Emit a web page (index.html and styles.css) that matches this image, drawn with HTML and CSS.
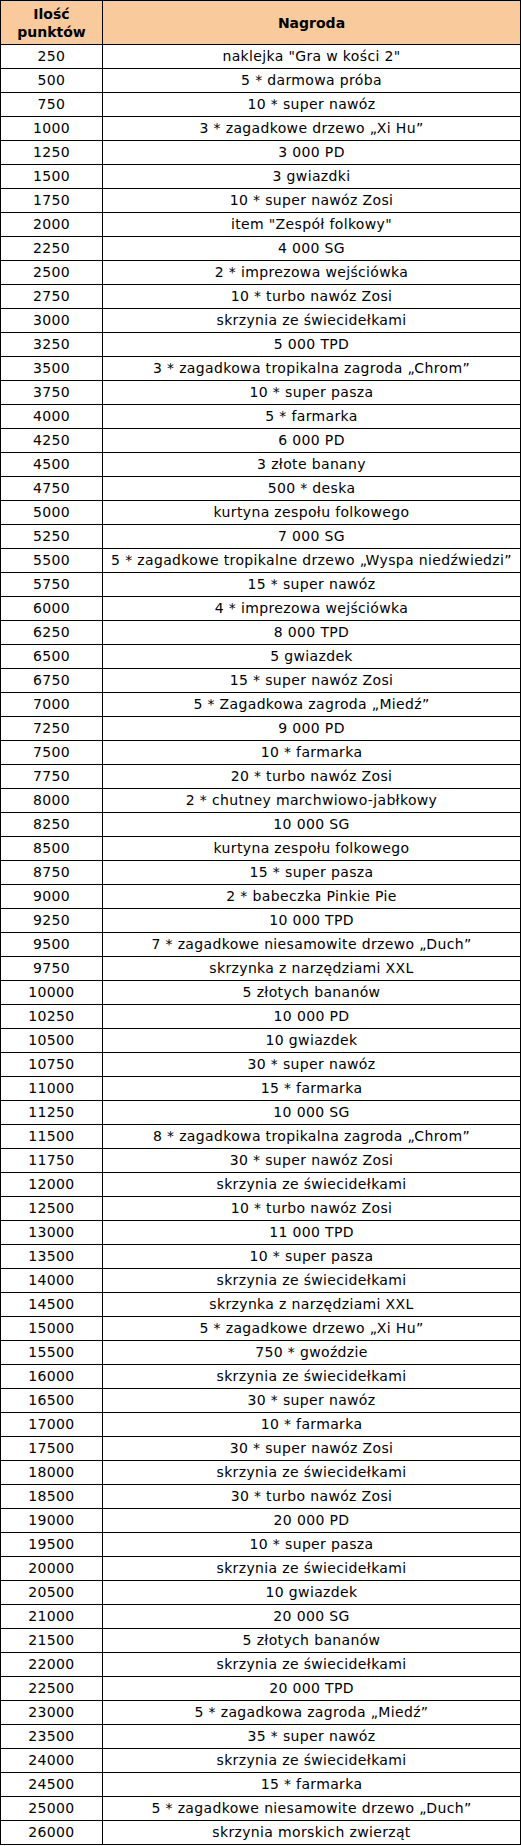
FILE: index.html
```html
<!DOCTYPE html>
<html lang="pl">
<head>
<meta charset="utf-8">
<title>Nagrody</title>
<link rel="stylesheet" href="styles.css">
</head>
<body>
<table class="rewards">
<colgroup><col class="c-pts"><col class="c-prize"></colgroup>
<thead>
<tr><th>Ilość<br>punktów</th><th>Nagroda</th></tr>
</thead>
<tbody>
<tr><td>250</td><td>naklejka "Gra w kości 2"</td></tr>
<tr><td>500</td><td>5 * darmowa próba</td></tr>
<tr><td>750</td><td>10 * super nawóz</td></tr>
<tr><td>1000</td><td>3 * zagadkowe drzewo „Xi Hu”</td></tr>
<tr><td>1250</td><td>3 000 PD</td></tr>
<tr><td>1500</td><td>3 gwiazdki</td></tr>
<tr><td>1750</td><td>10 * super nawóz Zosi</td></tr>
<tr><td>2000</td><td>item "Zespół folkowy"</td></tr>
<tr><td>2250</td><td>4 000 SG</td></tr>
<tr><td>2500</td><td>2 * imprezowa wejściówka</td></tr>
<tr><td>2750</td><td>10 * turbo nawóz Zosi</td></tr>
<tr><td>3000</td><td>skrzynia ze świecidełkami</td></tr>
<tr><td>3250</td><td>5 000 TPD</td></tr>
<tr><td>3500</td><td>3 * zagadkowa tropikalna zagroda „Chrom”</td></tr>
<tr><td>3750</td><td>10 * super pasza</td></tr>
<tr><td>4000</td><td>5 * farmarka</td></tr>
<tr><td>4250</td><td>6 000 PD</td></tr>
<tr><td>4500</td><td>3 złote banany</td></tr>
<tr><td>4750</td><td>500 * deska</td></tr>
<tr><td>5000</td><td>kurtyna zespołu folkowego</td></tr>
<tr><td>5250</td><td>7 000 SG</td></tr>
<tr><td>5500</td><td>5 * zagadkowe tropikalne drzewo „Wyspa niedźwiedzi”</td></tr>
<tr><td>5750</td><td>15 * super nawóz</td></tr>
<tr><td>6000</td><td>4 * imprezowa wejściówka</td></tr>
<tr><td>6250</td><td>8 000 TPD</td></tr>
<tr><td>6500</td><td>5 gwiazdek</td></tr>
<tr><td>6750</td><td>15 * super nawóz Zosi</td></tr>
<tr><td>7000</td><td>5 * Zagadkowa zagroda „Miedź”</td></tr>
<tr><td>7250</td><td>9 000 PD</td></tr>
<tr><td>7500</td><td>10 * farmarka</td></tr>
<tr><td>7750</td><td>20 * turbo nawóz Zosi</td></tr>
<tr><td>8000</td><td>2 * chutney marchwiowo-jabłkowy</td></tr>
<tr><td>8250</td><td>10 000 SG</td></tr>
<tr><td>8500</td><td>kurtyna zespołu folkowego</td></tr>
<tr><td>8750</td><td>15 * super pasza</td></tr>
<tr><td>9000</td><td>2 * babeczka Pinkie Pie</td></tr>
<tr><td>9250</td><td>10 000 TPD</td></tr>
<tr><td>9500</td><td>7 * zagadkowe niesamowite drzewo „Duch”</td></tr>
<tr><td>9750</td><td>skrzynka z narzędziami XXL</td></tr>
<tr><td>10000</td><td>5 złotych bananów</td></tr>
<tr><td>10250</td><td>10 000 PD</td></tr>
<tr><td>10500</td><td>10 gwiazdek</td></tr>
<tr><td>10750</td><td>30 * super nawóz</td></tr>
<tr><td>11000</td><td>15 * farmarka</td></tr>
<tr><td>11250</td><td>10 000 SG</td></tr>
<tr><td>11500</td><td>8 * zagadkowa tropikalna zagroda „Chrom”</td></tr>
<tr><td>11750</td><td>30 * super nawóz Zosi</td></tr>
<tr><td>12000</td><td>skrzynia ze świecidełkami</td></tr>
<tr><td>12500</td><td>10 * turbo nawóz Zosi</td></tr>
<tr><td>13000</td><td>11 000 TPD</td></tr>
<tr><td>13500</td><td>10 * super pasza</td></tr>
<tr><td>14000</td><td>skrzynia ze świecidełkami</td></tr>
<tr><td>14500</td><td>skrzynka z narzędziami XXL</td></tr>
<tr><td>15000</td><td>5 * zagadkowe drzewo „Xi Hu”</td></tr>
<tr><td>15500</td><td>750 * gwoździe</td></tr>
<tr><td>16000</td><td>skrzynia ze świecidełkami</td></tr>
<tr><td>16500</td><td>30 * super nawóz</td></tr>
<tr><td>17000</td><td>10 * farmarka</td></tr>
<tr><td>17500</td><td>30 * super nawóz Zosi</td></tr>
<tr><td>18000</td><td>skrzynia ze świecidełkami</td></tr>
<tr><td>18500</td><td>30 * turbo nawóz Zosi</td></tr>
<tr><td>19000</td><td>20 000 PD</td></tr>
<tr><td>19500</td><td>10 * super pasza</td></tr>
<tr><td>20000</td><td>skrzynia ze świecidełkami</td></tr>
<tr><td>20500</td><td>10 gwiazdek</td></tr>
<tr><td>21000</td><td>20 000 SG</td></tr>
<tr><td>21500</td><td>5 złotych bananów</td></tr>
<tr><td>22000</td><td>skrzynia ze świecidełkami</td></tr>
<tr><td>22500</td><td>20 000 TPD</td></tr>
<tr><td>23000</td><td>5 * zagadkowa zagroda „Miedź”</td></tr>
<tr><td>23500</td><td>35 * super nawóz</td></tr>
<tr><td>24000</td><td>skrzynia ze świecidełkami</td></tr>
<tr><td>24500</td><td>15 * farmarka</td></tr>
<tr><td>25000</td><td>5 * zagadkowe niesamowite drzewo „Duch”</td></tr>
<tr><td>26000</td><td>skrzynia morskich zwierząt</td></tr>
</tbody>
</table>
</body>
</html>
```

FILE: styles.css
```css
html, body {
  margin: 0;
  padding: 0;
  background: #ffffff;
}

.rewards {
  border-collapse: collapse;
  table-layout: fixed;
  width: 520px;
  font-family: "DejaVu Sans", "Liberation Sans", sans-serif;
  font-size: 14px;
  letter-spacing: 0.35px;
  color: #000000;
}

.c-pts { width: 102px; }
.c-prize { width: 418px; }

.rewards th,
.rewards td {
  border: 1px solid #000000;
  padding: 0;
  text-align: center;
  vertical-align: middle;
  white-space: nowrap;
}

.rewards th {
  background: #f9cb9c;
  height: 43px;
  font-weight: bold;
  letter-spacing: 0;
  line-height: 18px;
}

.rewards td {
  height: 23px;
  line-height: 17px;
}
```
